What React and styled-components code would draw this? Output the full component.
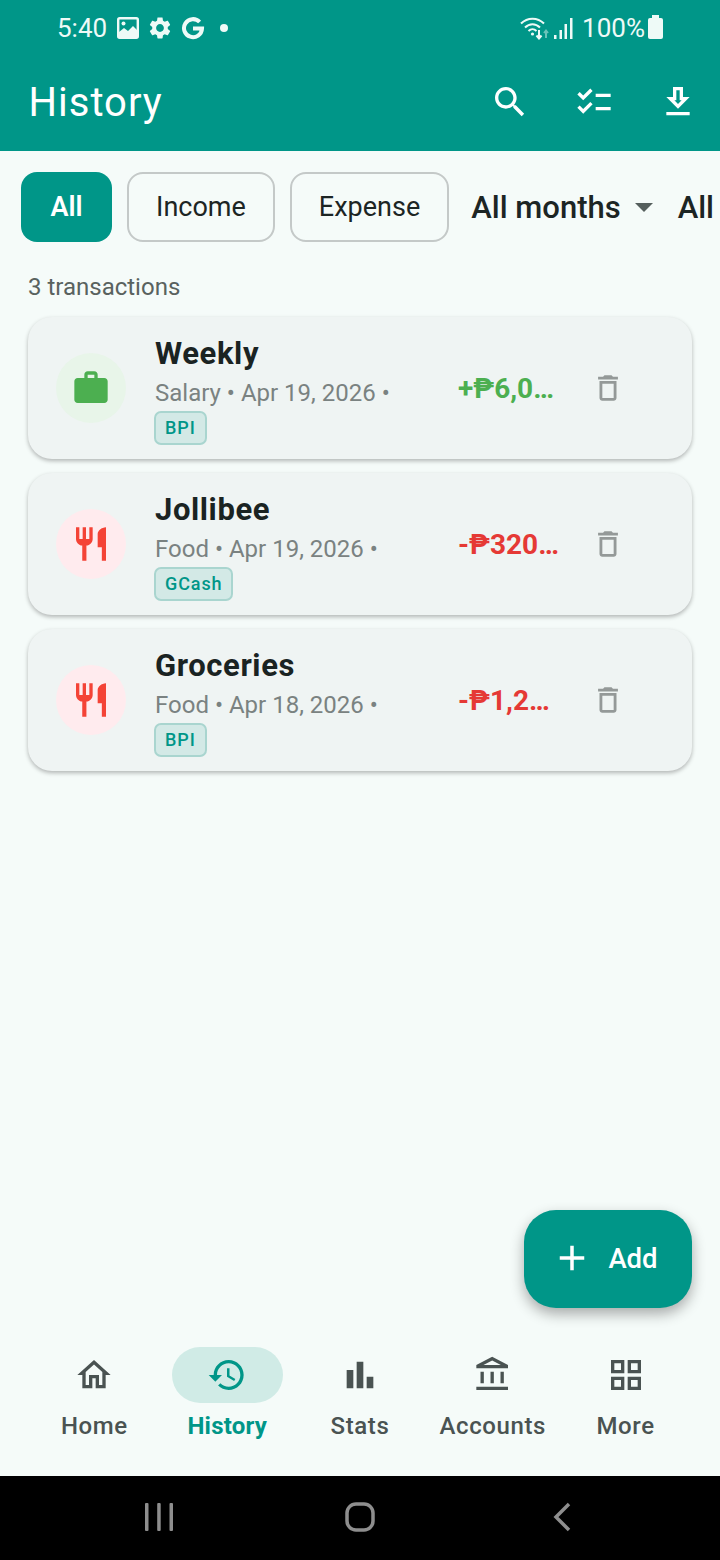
import React from 'react'
import styled, { createGlobalStyle } from 'styled-components'

const Global = createGlobalStyle`
  html, body { margin: 0; padding: 0; background: #f5fbf9; }
  * { box-sizing: border-box; }
  body { font-family: Roboto, "Noto Sans", sans-serif; }
`

const Page = styled.div`
  position: relative;
  width: 720px;
  height: 1560px;
  overflow: hidden;
  display: flex;
  flex-direction: column;
  background: #f5fbf9;
`
const Header = styled.header`
  background: #009688;
  color: #fff;
  height: 151px;
  flex-shrink: 0;
`
const StatusBar = styled.div`
  height: 56px;
  padding: 0 57px 0 57px;
  display: flex;
  align-items: center;
  justify-content: space-between;
  font-size: 26px;
  color: #eefaf7;
`
const StatusGroup = styled.div`
  display: flex;
  align-items: center;
  gap: ${p => p.$gap || 0}px;
`
const Clock = styled.span`
  margin-right: 2px;
`
const Dot = styled.span`
  width: 8px;
  height: 8px;
  border-radius: 50%;
  background: #eefaf7;
  margin-left: 7px;
`
const Percent = styled.span`
  margin-left: 9px;
`
const Signal = styled.span`
  display: flex;
  margin-left: 3px;
`
const Battery = styled.span`
  position: relative;
  display: block;
  width: 15px;
  height: 21px;
  margin-left: 3px;
  background: #eefaf7;
  border-radius: 2px;
  &::before {
    content: '';
    position: absolute;
    top: -3px;
    left: 4px;
    width: 7px;
    height: 3px;
    background: #eefaf7;
  }
`
const AppBar = styled.div`
  height: 95px;
  padding-left: 28.5px;
  padding-bottom: 3px;
  display: flex;
  align-items: center;
`
const Title = styled.h1`
  flex: 1;
  margin: 0;
  font-size: 40px;
  font-weight: 400;
  letter-spacing: 1px;
`
const IconButton = styled.div`
  width: 84px;
  display: flex;
  justify-content: center;
`
const Filters = styled.div`
  display: flex;
  align-items: center;
  gap: 15px;
  padding: 21px 0 0 21px;
  flex-shrink: 0;
`
const Chip = styled.div`
  height: 70px;
  flex-shrink: 0;
  padding: 0 ${p => (p.$active ? 29.5 : 27)}px;
  display: flex;
  align-items: center;
  border-radius: 16px;
  font-size: 27px;
  font-weight: ${p => (p.$active ? 600 : 400)};
  color: ${p => (p.$active ? '#fff' : '#1c2524')};
  background: ${p => (p.$active ? '#009688' : 'transparent')};
  border: ${p => (p.$active ? 'none' : '2px solid #c4c9c8')};
`
const Dropdown = styled.div`
  flex-shrink: 0;
  display: flex;
  align-items: center;
  gap: 14px;
  margin-left: 7px;
  margin-right: 3px;
  font-size: 31px;
  font-weight: 500;
  color: #1c2524;
  white-space: nowrap;
`
const Caret = styled.span`
  width: 0;
  height: 0;
  border-left: 9px solid transparent;
  border-right: 9px solid transparent;
  border-top: 9px solid #555f5d;
`
const Count = styled.div`
  margin: 30px 0 0 28px;
  height: 30px;
  line-height: 30px;
  font-size: 24px;
  color: #59625f;
`
const List = styled.div`
  display: flex;
  flex-direction: column;
  gap: 14px;
  padding: 15px 28px 0;
`
const Card = styled.div`
  height: 142px;
  padding: 0 67px 0 28px;
  display: flex;
  align-items: center;
  background: #eff4f3;
  border-radius: 24px;
  box-shadow: 0 2px 4px rgba(0, 0, 0, 0.28);
`
const Avatar = styled.div`
  width: 70px;
  height: 70px;
  flex-shrink: 0;
  border-radius: 50%;
  display: flex;
  align-items: center;
  justify-content: center;
  background: ${p => p.$bg};
  color: ${p => p.$color};
`
const Body = styled.div`
  width: 303px;
  margin-left: 29px;
  flex-shrink: 0;
  align-self: stretch;
  padding-top: 18px;
`
const Name = styled.div`
  font-size: 31px;
  line-height: 38px;
  font-weight: 700;
  letter-spacing: 0.6px;
  color: #1a2322;
`
const Meta = styled.div`
  display: flex;
  flex-direction: column;
  align-items: flex-start;
  margin-top: 4px;
  font-size: 24px;
  line-height: 32px;
  color: #7a8281;
`
const Tag = styled.span`
  height: 34px;
  padding: 0 9px;
  margin: 2px 0 0 -1px;
  display: inline-flex;
  align-items: center;
  font-size: 18px;
  font-weight: 500;
  letter-spacing: 0.9px;
  color: #009688;
  background: #d3e9e6;
  border: 2px solid #a9d5cf;
  border-radius: 7px;
`
const Amount = styled.div`
  width: 103px;
  flex-shrink: 0;
  white-space: nowrap;
  overflow: hidden;
  text-overflow: ellipsis;
  font-size: 28px;
  font-weight: 700;
  color: ${p => p.$color};
`
const Trash = styled.div`
  margin-left: auto;
  display: flex;
  color: #949998;
`
const Fab = styled.div`
  position: absolute;
  right: 28px;
  top: 1210px;
  width: 168px;
  height: 98px;
  padding: 0 7px 2px 0;
  display: flex;
  align-items: center;
  justify-content: center;
  gap: 15px;
  border-radius: 32px;
  background: #009688;
  color: #fff;
  font-size: 27.5px;
  font-weight: 500;
  box-shadow: 0 6px 14px rgba(0, 0, 0, 0.32);
`
const Spacer = styled.div`
  flex: 1;
`
const Nav = styled.nav`
  height: 146px;
  flex-shrink: 0;
  padding: 17px 28px 0;
  display: grid;
  grid-template-columns: repeat(5, 1fr);
`
const NavItem = styled.div`
  display: flex;
  flex-direction: column;
  align-items: center;
  color: ${p => (p.$active ? '#009688' : '#4a5352')};
`
const NavIcon = styled.div`
  width: 111px;
  height: 56px;
  border-radius: 28px;
  display: flex;
  align-items: center;
  justify-content: center;
  background: ${p => (p.$active ? '#d0ebe6' : 'transparent')};
`
const NavLabel = styled.div`
  margin-top: 8px;
  font-size: 24px;
  line-height: 30px;
  letter-spacing: ${p => (p.$active ? 0.2 : 0.6)}px;
  font-weight: ${p => (p.$active ? 700 : 500)};
`
const SystemBar = styled.div`
  height: 84px;
  flex-shrink: 0;
  padding: 0 5px 2px 0;
  background: #000;
  display: flex;
  align-items: center;
  justify-content: center;
  gap: 172px;
  color: #8e8e8e;
`
const BackSlot = styled.span`
  display: flex;
  margin-left: 6px;
`

const Icon = ({ d, size = 40, evenodd }) => (
  <svg width={size} height={size} viewBox="0 0 24 24" fill="currentColor">
    <path d={d} fillRule={evenodd ? 'evenodd' : undefined} />
  </svg>
)

const paths = {
  search: 'M15.5 14h-.79l-.28-.27C15.41 12.59 16 11.11 16 9.5 16 5.91 13.09 3 9.5 3S3 5.91 3 9.5 5.91 16 9.5 16c1.61 0 3.09-.59 4.23-1.57l.27.28v.79l5 4.99L20.49 19l-4.99-5zm-6 0C7.01 14 5 11.99 5 9.5S7.01 5 9.5 5 14 7.01 14 9.5 11.99 14 9.5 14z',
  checklist: 'M22 7h-9v2h9V7zm0 8h-9v2h9v-2zM5.54 11 2 7.46l1.41-1.41 2.12 2.12 4.24-4.24 1.41 1.41L5.54 11zm0 8L2 15.46l1.41-1.41 2.12 2.12 4.24-4.24 1.41 1.41L5.54 19z',
  download: 'M19 9h-4V3H9v6H5l7 7 7-7zm-8 2V5h2v6h1.17L12 13.17 9.83 11H11zm-6 7h14v2H5z',
  home: 'M12 5.69l5 4.5V18h-2v-6H9v6H7v-7.81l5-4.5M12 3L2 12h3v8h6v-6h2v6h6v-8h3L12 3z',
  history: 'M13 3c-4.97 0-9 4.03-9 9H1l3.89 3.89.07.14L9 12H6c0-3.87 3.13-7 7-7s7 3.13 7 7-3.13 7-7 7c-1.93 0-3.68-.79-4.94-2.06l-1.42 1.42C8.27 19.99 10.51 21 13 21c4.97 0 9-4.03 9-9s-4.03-9-9-9zm-1 5v5l4.28 2.54.72-1.21-3.5-2.08V8H12z',
  stats: 'M4 9h4v11H4zM16 13h4v7h-4zM10 4h4v16h-4z',
  bank: 'M6.5 10h-2v7h2v-7zm6 0h-2v7h2v-7zm8.5 9H2v2h19v-2zm-2.5-9h-2v7h2v-7zm-7-6.74L16.71 6H6.29l5.21-2.74m0-2.26L2 6v2h19V6l-9.5-5z',
  grid: 'M3 3v8h8V3H3zm6 6H5V5h4v4zm-6 4v8h8v-8H3zm6 6H5v-4h4v4zm4-16v8h8V3h-8zm6 6h-4V5h4v4zm-6 4v8h8v-8h-8zm6 6h-4v-4h4v4z',
  trash: 'M6 19c0 1.1.9 2 2 2h8c1.1 0 2-.9 2-2V7H6v12zM8 9h8v10H8V9zm7.5-5l-1-1h-5l-1 1H5v2h14V4h-3.5z',
  work: 'M20 6h-4V4c0-1.11-.89-2-2-2h-4c-1.11 0-2 .89-2 2v2H4c-1.11 0-1.99.89-1.99 2L2 19c0 1.11.89 2 2 2h16c1.11 0 2-.89 2-2V8c0-1.11-.89-2-2-2zm-6 0h-4V4h4v2z',
  food: 'M11 9H9V2H7v7H5V2H3v7c0 2.12 1.66 3.84 3.75 3.97V22h2.5v-9.03C11.34 12.84 13 11.12 13 9V2h-2v7zm5-3v8h2.5v8H21V2c-2.76 0-5 2.24-5 4z',
  add: 'M19 13h-6v6h-2v-6H5v-2h6V5h2v6h6v2z',
  gear: 'M19.14 12.94c.04-.3.06-.61.06-.94 0-.32-.02-.64-.07-.94l2.03-1.58c.18-.14.23-.41.12-.61l-1.92-3.32c-.12-.22-.37-.29-.59-.22l-2.39.96c-.5-.38-1.03-.7-1.62-.94l-.36-2.54c-.04-.24-.24-.41-.48-.41h-3.84c-.24 0-.43.17-.47.41l-.36 2.54c-.59.24-1.13.57-1.62.94l-2.39-.96c-.22-.08-.47 0-.59.22L2.74 8.87c-.12.21-.08.47.12.61l2.03 1.58c-.05.3-.09.63-.09.94s.02.64.07.94l-2.03 1.58c-.18.14-.23.41-.12.61l1.92 3.32c.12.22.37.29.59.22l2.39-.96c.5.38 1.03.7 1.62.94l.36 2.54c.05.24.24.41.48.41h3.84c.24 0 .44-.17.47-.41l.36-2.54c.59-.24 1.13-.56 1.62-.94l2.39.96c.22.08.47 0 .59-.22l1.92-3.32c.12-.22.07-.47-.12-.61l-2.01-1.58zM12 15.6c-1.98 0-3.6-1.62-3.6-3.6s1.62-3.6 3.6-3.6 3.6 1.62 3.6 3.6-1.62 3.6-3.6 3.6z',
}

const ImageGlyph = () => (
  <svg width="22" height="22" viewBox="0 0 22 22">
    <rect x="1.2" y="1.2" width="19.6" height="19.6" rx="1.5" fill="none" stroke="currentColor" strokeWidth="2.4" />
    <path d="M2 20v-5l5-4 4 3 5-5 4 4v7z" fill="currentColor" />
    <circle cx="6.5" cy="6.5" r="2" fill="currentColor" />
  </svg>
)

const GoogleGlyph = () => (
  <svg width="24" height="24" viewBox="0 0 24 24" fill="none" stroke="currentColor" strokeWidth="4">
    <path d="M18.6 6A9 9 0 1 0 21 12.6H12" />
  </svg>
)

const WifiGlyph = () => (
  <svg width="30" height="24" viewBox="0 0 30 24" fill="none" stroke="currentColor" strokeWidth="2">
    <path d="M1 7.5C7.5 1 17.5 1 24 7.5" />
    <path d="M5 11.5C9.5 7 15.5 7 20 11.5" />
    <path d="M8.5 15C11 12.5 14 12.5 16.5 15" />
    <circle cx="12.5" cy="18" r="1.6" fill="currentColor" stroke="none" />
    <path d="M19 14v8M16.5 19.5L19 22.5l2.5-3" />
    <path d="M26 22v-7M24 17l2-2.5 2 2.5" opacity="0.45" />
  </svg>
)

const SignalGlyph = () => (
  <svg width="20" height="24" viewBox="0 0 20 24" fill="currentColor">
    <rect x="1" y="19" width="2.5" height="4" />
    <rect x="6.5" y="14" width="2.5" height="9" />
    <rect x="11.5" y="8" width="2.5" height="15" />
    <rect x="17" y="2" width="2.5" height="21" />
  </svg>
)

const MenuKey = () => (
  <svg width="28" height="30" viewBox="0 0 28 30" fill="currentColor">
    <rect x="0" y="1" width="3.5" height="28" rx="1" />
    <rect x="12.2" y="1" width="3.5" height="28" rx="1" />
    <rect x="24.5" y="1" width="3.5" height="28" rx="1" />
  </svg>
)

const HomeKey = () => (
  <svg width="30" height="30" viewBox="0 0 30 30" fill="none" stroke="currentColor" strokeWidth="3.5">
    <rect x="2" y="2" width="26" height="26" rx="9" />
  </svg>
)

const BackKey = () => (
  <svg width="18" height="30" viewBox="0 0 18 30" fill="none" stroke="currentColor" strokeWidth="3.5">
    <path d="M16 2L3 15l13 13" />
  </svg>
)

const transactions = [
  { name: 'Weekly', meta: 'Salary • Apr 19, 2026 •', tag: 'BPI', amount: '+₱6,000.00', icon: 'work', income: true },
  { name: 'Jollibee', meta: 'Food • Apr 19, 2026 •', tag: 'GCash', amount: '-₱320.00', icon: 'food' },
  { name: 'Groceries', meta: 'Food • Apr 18, 2026 •', tag: 'BPI', amount: '-₱1,250.00', icon: 'food' },
]

const tabs = [
  { label: 'Home', icon: 'home' },
  { label: 'History', icon: 'history', active: true },
  { label: 'Stats', icon: 'stats' },
  { label: 'Accounts', icon: 'bank' },
  { label: 'More', icon: 'grid' },
]

const App = () => (
  <Page>
    <Global />
    <Header>
      <StatusBar>
        <StatusGroup $gap={8}>
          <Clock>5:40</Clock>
          <ImageGlyph />
          <Icon d={paths.gear} size={26} />
          <GoogleGlyph />
          <Dot />
        </StatusGroup>
        <StatusGroup>
          <WifiGlyph />
          <Signal><SignalGlyph /></Signal>
          <Percent>100%</Percent>
          <Battery />
        </StatusGroup>
      </StatusBar>
      <AppBar>
        <Title>History</Title>
        <IconButton><Icon d={paths.search} /></IconButton>
        <IconButton><Icon d={paths.checklist} /></IconButton>
        <IconButton><Icon d={paths.download} evenodd /></IconButton>
      </AppBar>
    </Header>

    <Filters>
      <Chip $active>All</Chip>
      <Chip>Income</Chip>
      <Chip>Expense</Chip>
      <Dropdown>All months <Caret /></Dropdown>
      <Dropdown>All accounts <Caret /></Dropdown>
    </Filters>

    <Count>3 transactions</Count>

    <List>
      {transactions.map(t => (
        <Card key={t.name}>
          <Avatar $bg={t.income ? '#e8f5e9' : '#ffebee'} $color={t.income ? '#4caf50' : '#f44336'}>
            <Icon d={paths[t.icon]} />
          </Avatar>
          <Body>
            <Name>{t.name}</Name>
            <Meta>
              <span>{t.meta}</span>
              <Tag>{t.tag}</Tag>
            </Meta>
          </Body>
          <Amount $color={t.income ? '#4caf50' : '#e53935'}>{t.amount}</Amount>
          <Trash><Icon d={paths.trash} size={34} /></Trash>
        </Card>
      ))}
    </List>

    <Spacer />

    <Fab>
      <Icon d={paths.add} size={42} />
      Add
    </Fab>

    <Nav>
      {tabs.map(t => (
        <NavItem key={t.label} $active={t.active}>
          <NavIcon $active={t.active}><Icon d={paths[t.icon]} /></NavIcon>
          <NavLabel $active={t.active}>{t.label}</NavLabel>
        </NavItem>
      ))}
    </Nav>

    <SystemBar>
      <MenuKey />
      <HomeKey />
      <BackSlot><BackKey /></BackSlot>
    </SystemBar>
  </Page>
)

export default App
